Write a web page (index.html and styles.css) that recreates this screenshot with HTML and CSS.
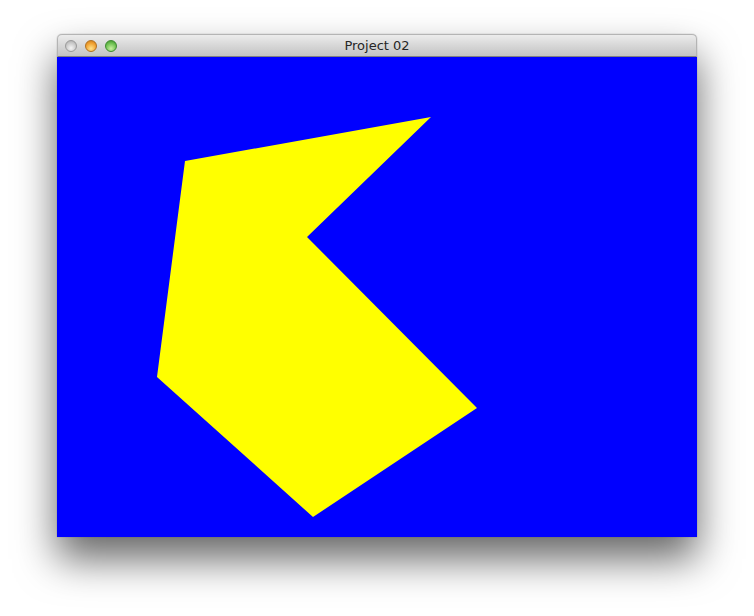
FILE: index.html
```html
<!DOCTYPE html>
<html>
<head>
<meta charset="utf-8">
<title>Project 02</title>
<link rel="stylesheet" href="styles.css">
</head>
<body>
<div class="window">
  <div class="titlebar">
    <div class="lights">
      <span class="light close"></span>
      <span class="light min"></span>
      <span class="light max"></span>
    </div>
    <div class="title">Project 02</div>
  </div>
  <div class="canvas">
    <svg width="640" height="480" viewBox="0 0 640 480" xmlns="http://www.w3.org/2000/svg">
      <rect width="640" height="480" fill="#0000ff"/>
      <polygon points="374,60 250,180 420,351 256,460 100,320 128,104" fill="#ffff00"/>
    </svg>
  </div>
</div>
</body>
</html>
```

FILE: styles.css
```css
html, body {
  margin: 0;
  padding: 0;
  background: #ffffff;
}
body {
  padding: 34px 0 0 57px;
  width: 754px;
  height: 616px;
  box-sizing: border-box;
  overflow: hidden;
}
.window {
  width: 640px;
  border-radius: 5px 5px 0 0;
  box-shadow: 0 22px 40px rgba(0,0,0,0.6), 0 0 1px rgba(0,0,0,0.5);
  display: flex;
  flex-direction: column;
}
.titlebar {
  height: 23px;
  box-sizing: border-box;
  border: 1px solid #b4b4b4;
  border-bottom: 1px solid #808080;
  border-radius: 5px 5px 0 0;
  background: linear-gradient(#ececec, #d3d3d3 60%, #c4c4c4);
  display: flex;
  align-items: center;
  position: relative;
}
.lights {
  display: flex;
  gap: 8px;
  padding-left: 7px;
}
.light {
  width: 12px;
  height: 12px;
  border-radius: 50%;
  box-sizing: border-box;
}
.close {
  background: radial-gradient(circle at 50% 70%, #f4f4f4, #c8c8c8 60%, #a8a8a8);
  border: 1px solid #9a9a9a;
}
.min {
  background: radial-gradient(circle at 50% 75%, #ffe28a, #f0a030 60%, #c87818);
  border: 1px solid #b07020;
}
.max {
  background: radial-gradient(circle at 50% 75%, #c8f0a0, #6cc050 60%, #3a8a28);
  border: 1px solid #3e8a30;
}
.title {
  position: absolute;
  left: 0;
  right: 0;
  top: 0;
  bottom: 0;
  display: flex;
  align-items: center;
  justify-content: center;
  font-family: "DejaVu Sans", "Liberation Sans", sans-serif;
  font-size: 13px;
  color: #262626;
}
.canvas {
  height: 480px;
  line-height: 0;
}
.canvas svg {
  display: block;
}
```
